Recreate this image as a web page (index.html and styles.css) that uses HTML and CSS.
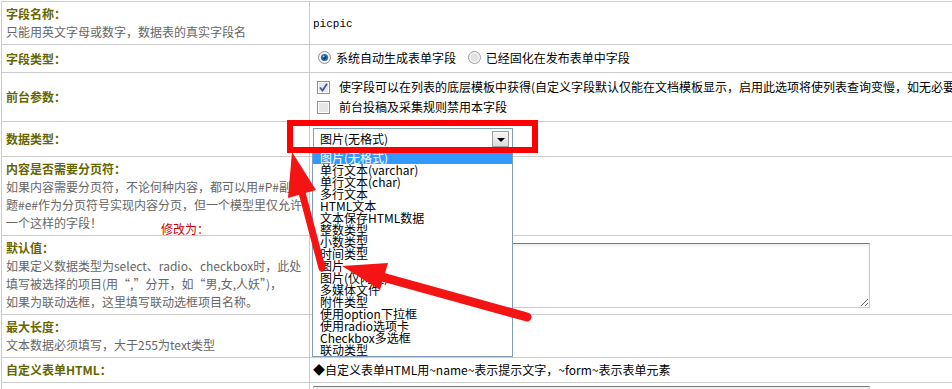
FILE: index.html
```html
<!DOCTYPE html>
<html lang="zh-CN">
<head>
    <meta charset="UTF-8">
    <title>字段设置</title>
    <link rel="stylesheet" href="styles.css">
</head>
<body>
    <table class="field-table">
        <colgroup>
            <col class="col-label">
            <col>
        </colgroup>
        <tr class="r-name">
            <td class="lbl"><b>字段名称：</b><br>只能用英文字母或数字，数据表的真实字段名</td>
            <td class="val"><span class="mono">picpic</span></td>
        </tr>
        <tr class="r-type">
            <td class="lbl"><b>字段类型：</b></td>
            <td class="val">
                <span class="opt">
                    <svg class="radio" width="13" height="13" viewBox="0 0 13 13">
                        <circle cx="6.5" cy="6.5" r="6" fill="#f4f4f4" stroke="#8e8f8f"/>
                        <circle cx="6.5" cy="6.5" r="3.6" fill="#2d6cb5"/>
                        <circle cx="6.5" cy="6.5" r="2" fill="#0d3a6e"/>
                        <circle cx="5.6" cy="5.4" r="1" fill="#9fc6f0"/>
                    </svg>系统自动生成表单字段
                </span>
                <span class="opt">
                    <svg class="radio" width="13" height="13" viewBox="0 0 13 13">
                        <circle cx="6.5" cy="6.5" r="6" fill="#f4f4f4" stroke="#9a9a9a"/>
                        <circle cx="6.5" cy="6.5" r="4" fill="#e2e2e2"/>
                    </svg>已经固化在发布表单中字段
                </span>
            </td>
        </tr>
        <tr class="r-front">
            <td class="lbl"><b>前台参数：</b></td>
            <td class="val">
                <div class="chk-line">
                    <svg class="chk" width="13" height="13" viewBox="0 0 13 13">
                        <rect x="0.5" y="0.5" width="12" height="12" fill="#fff" stroke="#8e8f8f"/>
                        <rect x="2" y="2" width="9" height="9" fill="#e6e6e6"/>
                        <path d="M3 6.5 L5.5 9.5 L10 2.8" fill="none" stroke="#3c5a9a" stroke-width="1.8"/>
                    </svg>使字段可以在列表的底层模板中获得(自定义字段默认仅能在文档模板显示，启用此选项将使列表查询变慢，如无必要请不要启用)
                </div>
                <div class="chk-line">
                    <svg class="chk" width="13" height="13" viewBox="0 0 13 13">
                        <rect x="0.5" y="0.5" width="12" height="12" fill="#fff" stroke="#8e8f8f"/>
                        <rect x="2" y="2" width="9" height="9" fill="#e6e6e6"/>
                    </svg>前台投稿及采集规则禁用本字段
                </div>
            </td>
        </tr>
        <tr class="r-dtype">
            <td class="lbl"><b>数据类型：</b></td>
            <td class="val">
                <div class="select-wrap">
                    <div class="select-box">
                        <span>图片(无格式)</span>
                        <span class="select-btn"></span>
                    </div>
                    <ul class="select-list">
                        <li class="on">图片(无格式)</li>
                        <li>单行文本(varchar)</li>
                        <li>单行文本(char)</li>
                        <li>多行文本</li>
                        <li>HTML文本</li>
                        <li>文本保存HTML数据</li>
                        <li>整数类型</li>
                        <li>小数类型</li>
                        <li>时间类型</li>
                        <li>图片</li>
                        <li>图片(仅网址)</li>
                        <li>多媒体文件</li>
                        <li>附件类型</li>
                        <li>使用option下拉框</li>
                        <li>使用radio选项卡</li>
                        <li>Checkbox多选框</li>
                        <li>联动类型</li>
                    </ul>
                </div>
            </td>
        </tr>
        <tr class="r-page">
            <td class="lbl"><b>内容是否需要分页符：</b><br>如果内容需要分页符，不论何种内容，都可以用#P#副标<br>题#e#作为分页符号实现内容分页，但一个模型里仅允许<br>一个这样的字段！</td>
            <td class="val"></td>
        </tr>
        <tr class="r-default">
            <td class="lbl"><b>默认值：</b><br>如果定义数据类型为select、radio、checkbox时，此处<br>填写被选择的项目(用“,”分开，如“男,女,人妖”)，<br>如果为联动选框，这里填写联动选框项目名称。</td>
            <td class="val"><textarea class="txt"></textarea></td>
        </tr>
        <tr class="r-max">
            <td class="lbl"><b>最大长度：</b><br>文本数据必须填写，大于255为text类型</td>
            <td class="val"></td>
        </tr>
        <tr class="r-html">
            <td class="lbl"><b>自定义表单HTML：</b></td>
            <td class="val">◆自定义表单HTML用~name~表示提示文字，~form~表示表单元素</td>
        </tr>
        <tr class="r-last">
            <td class="lbl"></td>
            <td class="val"><textarea class="txt"></textarea></td>
        </tr>
    </table>

    <!-- 标注层 -->
    <div class="marks">
        <svg width="952" height="389" viewBox="0 0 952 389">
            <rect x="290" y="123" width="245" height="27" fill="none" stroke="#ff0000" stroke-width="6"/>
            <line x1="322" y1="268" x2="300" y2="185" stroke="#f41414" stroke-width="7" stroke-linecap="round"/>
            <polygon points="292,152 316,190 288,198" fill="#f41414"/>
            <line x1="527" y1="317" x2="375" y2="275" stroke="#f41414" stroke-width="9" stroke-linecap="round"/>
            <polygon points="342,266 388,263 380,290" fill="#f41414"/>
        </svg>
        <span class="note">修改为：</span>
    </div>
</body>
</html>
```

FILE: styles.css
```css
html, body {
    margin: 0;
    overflow: hidden;
}
body {
    position: relative;
    height: 389px;
    padding: 1px 0 0 1px;
    box-sizing: border-box;
    font-family: "Noto Sans CJK SC", sans-serif;
    font-size: 12px;
    color: #000;
    background-color: #fff;
}
.field-table {
    border-collapse: collapse;
    table-layout: fixed;
    width: 1200px;
}
.col-label {
    width: 308px;
}
.field-table td {
    border: 1px solid #cccccc;
    padding: 0;
    vertical-align: middle;
    white-space: nowrap;
}
.lbl {
    padding-left: 4px !important;
    line-height: 18px;
    color: #666;
}
.lbl b {
    color: #666600;
}
.val {
    padding-left: 3px !important;
    line-height: 18px;
}
.r-name td { height: 42px; }
.r-type td { height: 27px; }
.r-front td { height: 48px; }
.r-dtype td { height: 34px; }
.r-page td { height: 78px; }
.r-default td { height: 78px; }
.r-max td { height: 42px; }
.r-html td { height: 24px; }
.r-last td { height: 40px; vertical-align: top; }

.mono {
    font-family: "Liberation Mono", monospace;
    font-size: 11px;
}
/* 单选、复选 */
.opt {
    display: inline-flex;
    align-items: center;
    margin-left: 5px;
    margin-right: 4px;
}
.radio {
    margin-right: 5px;
}
.chk-line {
    display: flex;
    align-items: center;
    height: 20px;
    padding-left: 4px;
}
.chk {
    margin-right: 9px;
    flex-shrink: 0;
}
/* 下拉框 */
.select-wrap {
    position: relative;
    width: 200px;
}
.select-box {
    display: flex;
    justify-content: space-between;
    align-items: center;
    height: 20px;
    border: 1px solid #7f9db9;
    padding-left: 6px;
    background-color: #fff;
}
.select-btn {
    position: relative;
    width: 15px;
    height: 14px;
    margin-right: 3px;
    border: 1px solid #a0a0a0;
    background: linear-gradient(#f8f8f8, #dcdcdc);
}
.select-btn::after {
    content: "";
    position: absolute;
    left: 4px;
    top: 6px;
    border-left: 4px solid transparent;
    border-right: 4px solid transparent;
    border-top: 4px solid #000;
}
.select-list {
    position: absolute;
    left: -1px;
    top: 23px;
    width: 199px;
    margin: 0;
    padding: 0;
    list-style: none;
    border: 1px solid #7f9db9;
    background-color: #fff;
    z-index: 2;
}
.select-list li {
    height: 12px;
    line-height: 12px;
    padding-left: 7px;
    overflow: visible;
}
.select-list li.on {
    background-color: #3399ff;
    color: #fff;
}
/* 文本框 */
.txt {
    display: block;
    width: 557px;
    height: 65px;
    margin: 0;
    box-sizing: border-box;
    border: 1px solid #cccccc;
    border-top-color: #7a7a7a;
    box-shadow: inset 0 2px 3px rgba(0, 0, 0, 0.08);
    font: 12px "Noto Sans CJK SC", sans-serif;
}
.r-last .txt {
    margin-top: 3px;
}
/* 标注层 */
.marks {
    position: absolute;
    left: 0;
    top: 0;
    width: 952px;
    height: 389px;
    z-index: 5;
    pointer-events: none;
}
.marks svg {
    display: block;
}
.note {
    position: absolute;
    left: 161px;
    top: 221px;
    line-height: 16px;
    color: #cc0000;
}
```
